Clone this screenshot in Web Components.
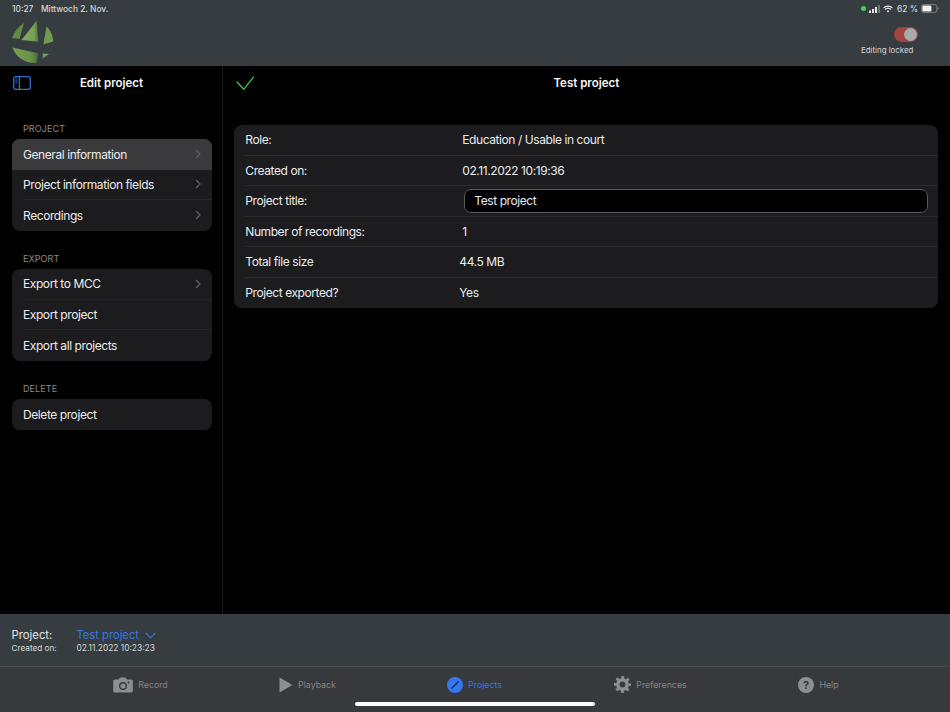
<!DOCTYPE html>
<html>
<head>
<meta charset="utf-8">
<title>Edit project</title>
<style>
  html, body { margin: 0; height: 100%; background: #000; }
  body { font-family: Inter, "Liberation Sans", sans-serif; color: #fff; overflow: hidden; }
  #app { display: flex; flex-direction: column; width: 950px; height: 712px; }
</style>
</head>
<body>
<div id="app">
  <top-bar></top-bar>
  <main-split>
    <side-nav slot="side">
      <nav-group title="PROJECT">
        <nav-row selected arrow>General information</nav-row>
        <nav-row arrow>Project information fields</nav-row>
        <nav-row arrow>Recordings</nav-row>
      </nav-group>
      <nav-group title="EXPORT">
        <nav-row arrow>Export to MCC</nav-row>
        <nav-row>Export project</nav-row>
        <nav-row>Export all projects</nav-row>
      </nav-group>
      <nav-group title="DELETE">
        <nav-row>Delete project</nav-row>
      </nav-group>
    </side-nav>
    <detail-panel slot="detail" heading="Test project">
      <info-row label="Role:" offset="0">Education / Usable in court</info-row>
      <info-row label="Created on:" offset="0">02.11.2022 10:19:36</info-row>
      <info-row label="Project title:" offset="0"><text-box value="Test project"></text-box></info-row>
      <info-row label="Number of recordings:" offset="0">1</info-row>
      <info-row label="Total file size" offset="-3">44.5 MB</info-row>
      <info-row label="Project exported?" offset="-3">Yes</info-row>
    </detail-panel>
  </main-split>
  <project-bar></project-bar>
  <tab-bar></tab-bar>
</div>

<script>
// small helper, every element gets an open shadow root with its own style
function sombra(el, html) {
  el.attachShadow({mode: 'open'}).innerHTML = html;
}

class TopBar extends HTMLElement {
  connectedCallback() {
    sombra(this, `<style>
      :host { display: block; flex: none; height: 66px; background: #363c40; color: #d4d7d9; }
      .status { display: flex; align-items: center; height: 17px; padding: 0 11px 0 12px; font-size: 8.4px; font-weight: 500; }
      .time { margin-right: 7.5px; }
      .right { margin-left: auto; display: flex; align-items: center; }
      .dot { width: 5px; height: 5px; border-radius: 50%; background: #3fd15c; margin-right: 3px; }
      .row { display: flex; padding: 0 32px 0 12px; align-items: flex-start; justify-content: space-between; }
      .lock { display: flex; flex-direction: column; width: 57px; margin-top: 10px; font-size: 7.9px; font-weight: 400; }
      .toggle { width: 24px; height: 15px; border-radius: 8px; background: #a0453f; position: relative; margin: 0 0 3px auto; }
      .toggle i { position: absolute; right: 1px; top: 1px; width: 13px; height: 13px; border-radius: 50%; background: #a7a9ab; }
      svg { display: block; }
    </style>
    <div class="status">
      <span class="time">10:27</span><span>Mittwoch 2. Nov.</span>
      <span class="right">
        <span class="dot"></span>
        <svg width="11" height="8" viewBox="0 0 11 8" style="margin-right:3px"><rect x="0" y="5.5" width="2" height="2.5" fill="#e6e8e9"/><rect x="3" y="4" width="2" height="4" fill="#e6e8e9"/><rect x="6" y="2" width="2" height="6" fill="#e6e8e9"/><rect x="9" y="0" width="2" height="8" fill="#6d7276"/></svg>
        <svg width="10" height="8" viewBox="0 0 11 8" style="margin-right:4px" fill="none" stroke="#eceeef" stroke-width="1.3"><path d="M.6 2.8C3.4.2 7.6.2 10.4 2.8"/><path d="M2.3 4.6c1.8-1.6 4.6-1.6 6.4 0"/><path d="M5.5 7.8 3.9 6.2c.9-.8 2.3-.8 3.2 0z" fill="#eceeef" stroke="none"/></svg>
        <span style="margin-right:3px;white-space:pre">62 %</span>
        <svg width="18" height="9" viewBox="0 0 18 9"><rect x=".4" y=".4" width="15.4" height="8.2" rx="2.4" fill="none" stroke="#8b8f92" stroke-width=".8"/><rect x="1.4" y="1.4" width="9" height="6.2" rx="1.3" fill="#f2f3f3"/><path d="M16.6 3v3c.7-.3 1.1-.9 1.1-1.5s-.4-1.2-1.1-1.5z" fill="#8b8f92"/></svg>
      </span>
    </div>
    <div class="row">
      <svg width="42" height="44" viewBox="12 20 42 44" style="margin-top:3px">
        <defs>
          <linearGradient id="g1" x1="0" x2="1" y1="0" y2="0"><stop offset="0" stop-color="#84ac5c"/><stop offset=".75" stop-color="#76a052"/><stop offset="1" stop-color="#4f7038"/></linearGradient>
          <linearGradient id="g2" x1="0" x2="1" y1="0" y2="0"><stop offset="0" stop-color="#76a052"/><stop offset=".7" stop-color="#6a9349"/><stop offset="1" stop-color="#486635"/></linearGradient>
        </defs>
        <path d="M12 38C14 32 18 27 24 23L19.5 39z" fill="#638a45"/>
        <path d="M21.5 40 36.8 20.5 38.3 41.7z" fill="url(#g1)"/>
        <path d="M46.5 26.5C50.5 30 53 36 53.3 41.5L43.3 44.5z" fill="#6f9a4f"/>
        <path d="M12.5 47.5 38.3 53.3 36.7 63C25 63.5 15.5 57 12.5 47.5z" fill="url(#g2)"/>
        <path d="M42.7 53.3 49.3 54 42.7 58.5z" fill="#6f9a4f"/>
      </svg>
      <div class="lock"><span class="toggle"><i></i></span><span style="white-space:nowrap">Editing locked</span></div>
    </div>`);
  }
}
customElements.define('top-bar', TopBar);

class MainSplit extends HTMLElement {
  connectedCallback() {
    sombra(this, `<style>
      :host { display: flex; flex: 1; min-height: 0; background: #000; }
      .side { width: 222px; flex: none; border-right: 1px solid #1c1c1e; }
      .detail { flex: 1; min-width: 0; }
    </style>
    <div class="side"><slot name="side"></slot></div>
    <div class="detail"><slot name="detail"></slot></div>`);
  }
}
customElements.define('main-split', MainSplit);

class SideNav extends HTMLElement {
  connectedCallback() {
    sombra(this, `<style>
      :host { display: block; padding: 0 10.5px 0 11.5px; }
      .head { display: flex; align-items: center; height: 33px; position: relative; justify-content: center; font-size: 11.5px; font-weight: 600; color: #f5f5f5; }
      svg { position: absolute; left: 1.5px; top: 10px; }
      .list { display: flex; flex-direction: column; gap: 22.5px; padding-top: 24px; }
    </style>
    <div class="head">
      <svg width="18" height="14" viewBox="0 0 18 14" fill="none" stroke="#2f6fd0" stroke-width="1.3"><rect x=".7" y=".7" width="16.6" height="12.6" rx="2"/><path d="M6.4.7v12.6"/><path d="M2.4 3h2M2.4 4.8h2M2.4 6.6h2" stroke-width="1"/></svg>
      Edit project
    </div>
    <div class="list"><slot></slot></div>`);
  }
}
customElements.define('side-nav', SideNav);

class NavGroup extends HTMLElement {
  connectedCallback() {
    sombra(this, `<style>
      :host { display: block; }
      .t { font-size: 9px; color: #8a8a8e; padding-left: 11.5px; height: 16px; line-height: 12px; letter-spacing: .1px; }
      .box { border-radius: 8px; overflow: hidden; background: #1c1c1e; }
    </style>
    <div class="t">${this.getAttribute('title')}</div>
    <div class="box"><slot></slot></div>`);
    this.removeAttribute('title');
  }
}
customElements.define('nav-group', NavGroup);

class NavRow extends HTMLElement {
  connectedCallback() {
    var arrow = this.hasAttribute('arrow') ? `<svg width="6" height="10" viewBox="0 0 6 10" fill="none" stroke="#5f5f63" stroke-width="1.2"><path d="M1 1l4 4-4 4"/></svg>` : '';
    sombra(this, `<style>
      :host { display: block; }
      :host([selected]) { background: #3a3a3c; }
      .r { display: flex; align-items: center; justify-content: space-between; box-sizing: border-box; height: 30.5px; margin-left: 11.5px; padding-right: 11px; border-bottom: 1px solid #27272a; font-size: 12px; letter-spacing: -.42px; color: #ebebec; }
      :host(:last-child) .r, :host([selected]) .r { border-bottom: none; }
    </style>
    <div class="r"><span><slot></slot></span>${arrow}</div>`);
  }
}
customElements.define('nav-row', NavRow);

class DetailPanel extends HTMLElement {
  connectedCallback() {
    sombra(this, `<style>
      :host { display: block; padding: 0 11.7px 0 11.3px; }
      .head { display: flex; align-items: center; justify-content: center; height: 33px; position: relative; font-size: 11.5px; font-weight: 600; color: #f5f5f5; }
      svg { position: absolute; left: 2px; top: 9px; }
      .box { margin-top: 26px; background: #1c1c1e; border-radius: 8px; overflow: hidden; }
    </style>
    <div class="head">
      <svg width="19" height="15" viewBox="0 0 19 15" fill="none" stroke="#3fc65a" stroke-width="1.3"><path d="M.8 6.7l7 7.6 10-12.6"/></svg>
      ${this.getAttribute('heading')}
    </div>
    <div class="box"><slot></slot></div>`);
  }
}
customElements.define('detail-panel', DetailPanel);

class InfoRow extends HTMLElement {
  connectedCallback() {
    var off = parseInt(this.getAttribute('offset'));
    sombra(this, `<style>
      :host { display: block; }
      .r { display: flex; align-items: center; height: 30.5px; margin-left: 11px; border-bottom: 1px solid #2a2a2c; box-sizing: border-box; font-size: 12px; letter-spacing: -.42px; color: #ebebec; }
      :host(:last-child) .r { border-bottom: none; }
      .l { width: ${217 + off}px; flex: none; }
      .v { flex: 1; min-width: 0; }
    </style>
    <div class="r"><span class="l">${this.getAttribute('label')}</span><span class="v"><slot></slot></span></div>`);
  }
}
customElements.define('info-row', InfoRow);

class TextBox extends HTMLElement {
  connectedCallback() {
    sombra(this, `<style>
      :host { display: block; margin: 0 10.6px 0 2px; }
      .b { height: 24px; box-sizing: border-box; background: #000; border: 1px solid #5a5a5e; border-radius: 7px; padding-left: 9px; line-height: 22px; color: #ebebec; }
    </style>
    <div class="b">${this.getAttribute('value')}</div>`);
  }
}
customElements.define('text-box', TextBox);

class ProjectBar extends HTMLElement {
  connectedCallback() {
    sombra(this, `<style>
      :host { display: block; flex: none; height: 52px; background: #363c40; border-bottom: 1px solid #454b4f; }
      .g { display: grid; grid-template-columns: 65px auto; row-gap: 1px; padding: 14px 0 0 11.5px; align-items: baseline; justify-content: start; }
      .a { font-size: 11.3px; color: #e3e5e6; }
      .b { font-size: 11.2px; color: #3478e0; display: flex; align-items: center; gap: 6px; }
      .c { font-size: 8.2px; color: #d5d8d9; }
      .d { font-size: 8.4px; color: #d5d8d9; }
    </style>
    <div class="g">
      <span class="a">Project:</span>
      <span class="b">Test project <svg width="11" height="7" viewBox="0 0 11 7" fill="none" stroke="#3478e0" stroke-width="1.2"><path d="M.6.8 5.5 6 10.4.8"/></svg></span>
      <span class="c">Created on:</span>
      <span class="d">02.11.2022 10:23:23</span>
    </div>`);
  }
}
customElements.define('project-bar', ProjectBar);

class TabBar extends HTMLElement {
  connectedCallback() {
    sombra(this, `<style>
      :host { display: block; flex: none; height: 45px; background: #37393c; position: relative; }
      .items { display: grid; grid-template-columns: 167px 167px 167px 185px 151px; padding-left: 57px; height: 35px; }
      .home { position: absolute; left: 355px; bottom: 6px; width: 240px; height: 4px; border-radius: 2px; background: #fff; }
    </style>
    <div class="items">
      <tab-item label="Record" kind="camera"></tab-item>
      <tab-item label="Playback" kind="play"></tab-item>
      <tab-item label="Projects" kind="projects" active></tab-item>
      <tab-item label="Preferences" kind="gear"></tab-item>
      <tab-item label="Help" kind="help"></tab-item>
    </div>
    <div class="home"></div>`);
  }
}
customElements.define('tab-bar', TabBar);

var iconos = {
  camera: `<svg width="20" height="16" viewBox="0 0 20 16"><path fill-rule="evenodd" fill="#8c8e90" d="M2 2.5h3.6L7 .4h5.6L14 2.5h4c1 0 1.8.8 1.8 1.8v9.4c0 1-.8 1.8-1.8 1.8H2c-1 0-1.8-.8-1.8-1.8V4.3C.2 3.3 1 2.5 2 2.5zM10 5a4 4 0 1 0 0 8 4 4 0 0 0 0-8zm0 1.4a2.6 2.6 0 1 1 0 5.2 2.6 2.6 0 0 1 0-5.2z"/><circle cx="15.5" cy="5.5" r="1" fill="#37393c"/></svg>`,
  play: `<svg width="14" height="16" viewBox="0 0 14 16"><path d="M.5.5 13.5 8 .5 15.5z" fill="#8c8e90"/></svg>`,
  projects: `<svg width="16" height="16" viewBox="0 0 16 16"><circle cx="8" cy="8" r="8" fill="#3478f0"/><path d="M4.5 11.5 11.5 4.5" stroke="#1d2a40" stroke-width="1.3"/></svg>`,
  gear: `<svg width="17" height="17" viewBox="0 0 17 17" fill="none" stroke="#8c8e90"><circle cx="8.5" cy="8.5" r="4.7" stroke-width="3.6"/><circle cx="8.5" cy="8.5" r="7.2" stroke-width="2.6" stroke-dasharray="2.83 2.83" stroke-dashoffset="1.41"/></svg>`,
  help: `<svg width="16" height="16" viewBox="0 0 16 16"><circle cx="8" cy="8" r="8" fill="#8c8e90"/><text x="8" y="12" text-anchor="middle" font-size="11" font-weight="700" font-family="Inter, sans-serif" fill="#37393c">?</text></svg>`
};

class TabItem extends HTMLElement {
  connectedCallback() {
    sombra(this, `<style>
      :host { display: flex; align-items: center; justify-content: center; gap: 5px; font-size: 8.8px; color: #838587; }
      :host([active]) { color: #3478e0; }
      svg { display: block; }
    </style>
    ${iconos[this.getAttribute('kind')]}<span>${this.getAttribute('label')}</span>`);
  }
}
customElements.define('tab-item', TabItem);
</script>
</body>
</html>
